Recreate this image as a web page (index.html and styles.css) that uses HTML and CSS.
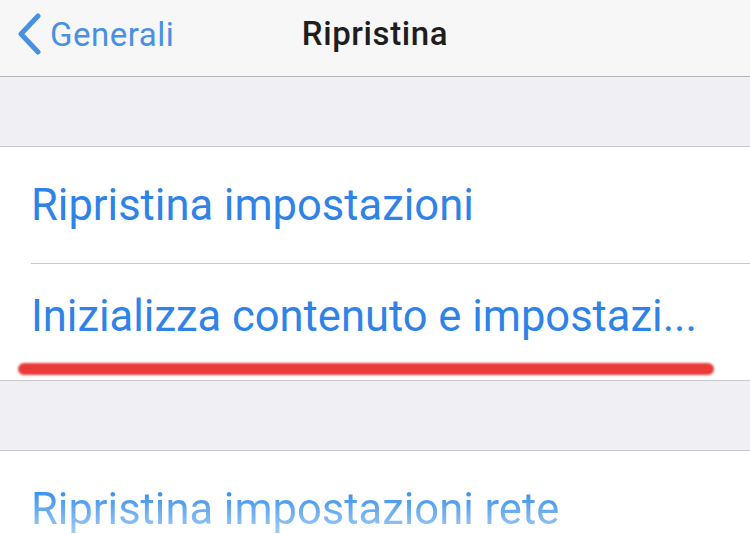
FILE: index.html
```html
<!DOCTYPE html>
<html lang="it">
<head>
<meta charset="utf-8">
<title>Ripristina</title>
<link rel="stylesheet" href="styles.css">
</head>
<body>
<div class="screen">
  <header class="nav">
    <a class="back" href="#">
      <svg class="chev" width="26" height="42" viewBox="0 0 26 42"><path d="M22 3 L5 21 L22 39" fill="none" stroke="#4a90e2" stroke-width="5" stroke-linecap="round" stroke-linejoin="round"/></svg>
      <span>Generali</span>
    </a>
    <h1 class="title">Ripristina</h1>
    <span class="spacer"></span>
  </header>
  <div class="gap"></div>
  <section class="group">
    <div class="row"><span class="label">Ripristina impostazioni</span></div>
    <div class="row mark"><span class="label">Inizializza contenuto e impostazi...</span><span class="underline"></span></div>
  </section>
  <div class="gap"></div>
  <section class="group">
    <div class="row"><span class="label fade">Ripristina impostazioni rete</span></div>
  </section>
</div>
</body>
</html>
```
FILE: styles.css
```css
html, body {
  margin: 0;
  padding: 0;
}
body {
  width: 750px;
  height: 534px;
  overflow: hidden;
  background: #ffffff;
  font-family: Roboto, "Liberation Sans", sans-serif;
}
.screen {
  height: 534px;
  overflow: hidden;
  display: flex;
  flex-direction: column;
}
.nav {
  flex: none;
  height: 76px;
  background: #f7f7f8;
  border-bottom: 1px solid #b4b4b6;
  display: grid;
  grid-template-columns: 1fr auto 1fr;
  align-items: center;
}
.back {
  display: flex;
  align-items: center;
  gap: 8px;
  padding-left: 16px;
  color: #4a90e2;
  text-decoration: none;
  font-size: 33px;
  letter-spacing: 0.5px;
  margin-top: -8px;
}
.chev {
  display: block;
}
.title {
  margin: 0;
  font-size: 33px;
  font-weight: 500;
  letter-spacing: 0.6px;
  color: #1e1e1e;
  margin-top: -10px;
}
.gap {
  flex: none;
  height: 69px;
  background: #efeff4;
  border-bottom: 1px solid #c8c7cc;
}
.group {
  flex: none;
  background: #ffffff;
  border-bottom: 1px solid #c8c7cc;
}
.row {
  height: 116px;
  margin-left: 31px;
  display: flex;
  align-items: center;
  border-bottom: 1px solid #c8c7cc;
  position: relative;
}
.row:last-child {
  border-bottom: none;
}
.label {
  font-size: 43.5px;
  color: #2f83e6;
}
.fade {
  background: linear-gradient(to bottom, #3f94ec 20%, #a9cff6 100%);
  -webkit-background-clip: text;
  background-clip: text;
  color: transparent;
}
.mark .label {
  margin-top: -12px;
}
.underline {
  position: absolute;
  left: -13px;
  top: 99px;
  width: 696px;
  height: 12px;
  border-radius: 6px;
  background: #e93a3a;
  filter: blur(1px);
}
```
